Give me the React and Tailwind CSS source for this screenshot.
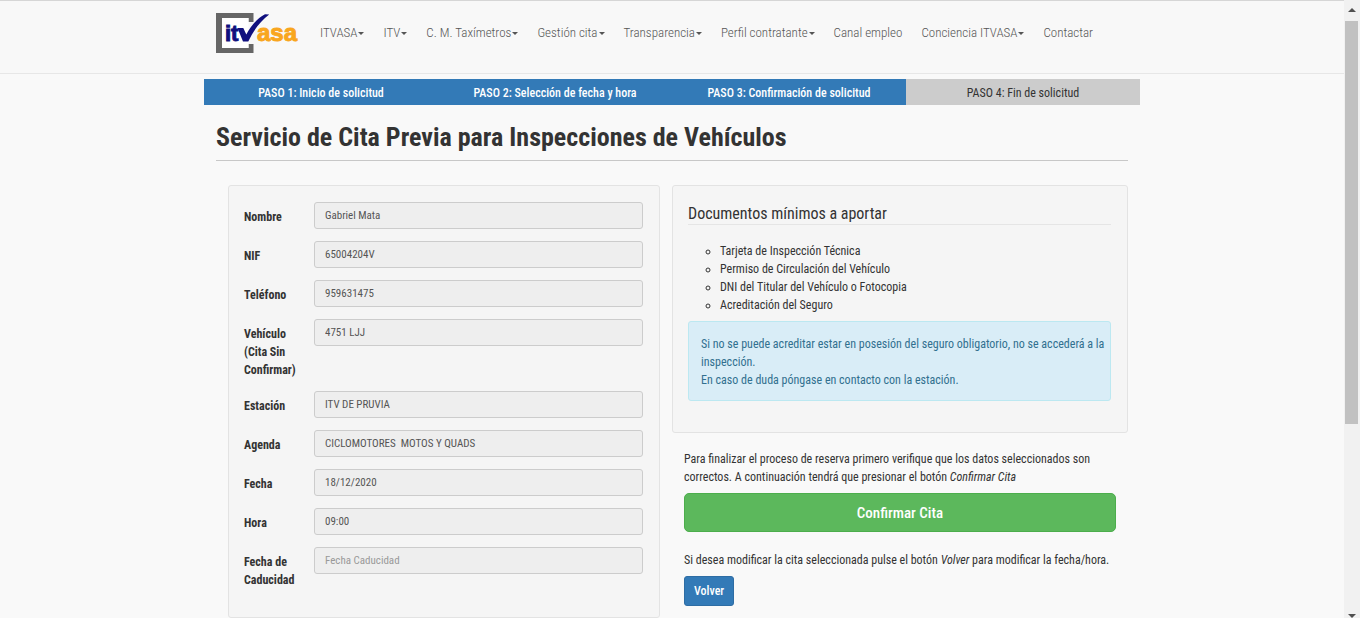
import React from "react";

const menu = [
    { name: "ITVASA", caret: true },
    { name: "ITV", caret: true },
    { name: "C. M. Taxímetros", caret: true },
    { name: "Gestión cita", caret: true },
    { name: "Transparencia", caret: true },
    { name: "Perfil contratante", caret: true },
    { name: "Canal empleo", caret: false },
    { name: "Conciencia ITVASA", caret: true },
    { name: "Contactar", caret: false },
];

const pasos = [
    "PASO 1: Inicio de solicitud",
    "PASO 2: Selección de fecha y hora",
    "PASO 3: Confirmación de solicitud",
    "PASO 4: Fin de solicitud",
];

const campos = [
    { id: "nombre", label: "Nombre", value: "Gabriel Mata" },
    { id: "nif", label: "NIF", value: "65004204V" },
    { id: "telefono", label: "Teléfono", value: "959631475" },
    { id: "vehiculo", label: "Vehículo (Cita Sin Confirmar)", value: "4751 LJJ" },
    { id: "estacion", label: "Estación", value: "ITV DE PRUVIA" },
    { id: "agenda", label: "Agenda", value: "CICLOMOTORES  MOTOS Y QUADS" },
    { id: "fecha", label: "Fecha", value: "18/12/2020" },
    { id: "hora", label: "Hora", value: "09:00" },
    { id: "caducidad", label: "Fecha de Caducidad", value: "", placeholder: "Fecha Caducidad" },
];

function Logo() {
    return (
        <svg width="82" height="40" viewBox="0 0 82 40" role="img" aria-label="itvasa">
            <path d="M37.500 9V0H0v40h37.500v-9h-5v4H6V5h26.500v4z" fill="#666" />
            <path d="M6 5h26.500v30H6z" fill="#fff" />
            <text x="9" y="28" fontFamily="Liberation Sans" fontWeight="bold" fontSize="22" fill="#10107e" stroke="#10107e">it</text>
            <path d="M21.500 15h5.800l3 6.500C35 13 41.500 5 49 1.200l4.200.3C44.500 8 37 18 32.300 28.500h-5.300z" fill="#10107e" />
            <text x="41" y="28" fontFamily="Liberation Sans" fontWeight="bold" fontSize="24" fill="#f9a61e" stroke="#f9a61e">asa</text>
        </svg>
    );
}

function Navbar() {
    return (
        <header className="border-y border-t-[#d6d6d6] border-b-[#e7e7e7] bg-[#f8f8f8]">
            <div className="max-w-[936px] h-[72px] mx-auto px-3 pt-3 flex items-start">
                <a href="#inicio" className="shrink-0">
                    <Logo />
                </a>
                <nav className="pl-[22px] pt-2">
                    <ul className="flex gap-[19px] text-[13px] leading-6 font-light text-[#555]">
                        {menu.map((m) => (
                            <li key={m.name}>
                                <a href="#menu" className="flex items-center gap-px whitespace-nowrap hover:text-gray-800">
                                    {m.name}
                                    {m.caret && (
                                        <svg width="6" height="3" viewBox="0 0 6 3" className="mt-px">
                                            <path d="M0 0h6L3 3z" fill="#555" />
                                        </svg>
                                    )}
                                </a>
                            </li>
                        ))}
                    </ul>
                </nav>
            </div>
        </header>
    );
}

function Pasos() {
    return (
        <ol className="-mx-3 grid grid-cols-4 text-center">
            {pasos.map((p, i) => (
                <li key={p} className={i < 3 ? "pt-[5px] pb-[3px] bg-[#337ab7] text-white font-medium" : "pt-[5px] pb-[3px] bg-[#ccc] text-[#333]"}>
                    {p}
                </li>
            ))}
        </ol>
    );
}

function Datos() {
    return (
        <form className="mx-3 p-4 pl-[15px] border border-[#e3e3e3] rounded-[3px] bg-[#f5f5f5]">
            {campos.map((c) => (
                <div key={c.id} className="flex items-start mb-3">
                    <label htmlFor={c.id} className="w-[70px] pr-3 pt-[6px] shrink-0 font-bold">
                        {c.label}
                    </label>
                    <input
                        id={c.id}
                        type="text"
                        readOnly
                        defaultValue={c.value}
                        placeholder={c.placeholder}
                        className="h-[27px] min-w-0 flex-1 px-[10px] text-[11px] text-[#555] placeholder:text-[#999] bg-[#eee] border border-[#ccc] rounded-[3px]"
                    />
                </div>
            ))}
        </form>
    );
}

function Documentos() {
    return (
        <div>
            <section className="p-[15px] pr-4 pb-[31px] border border-[#e3e3e3] rounded-[3px] bg-[#f5f5f5]">
                <h2 className="pt-[2px] text-base leading-[21px] border-b border-[#e5e5e5]">Documentos mínimos a aportar</h2>
                <ul className="mt-[17px] mb-[7px] pl-8 list-[circle]">
                    <li>Tarjeta de Inspección Técnica</li>
                    <li>Permiso de Circulación del Vehículo</li>
                    <li>DNI del Titular del Vehículo o Fotocopia</li>
                    <li>Acreditación del Seguro</li>
                </ul>
                <p className="pt-[13px] pb-[11px] pl-3 pr-1 border border-[#bce8f1] rounded-[3px] bg-[#d9edf7] text-[#31708f]">
                    Si no se puede acreditar estar en posesión del seguro obligatorio, no se accederá a la inspección.
                    <br />
                    En caso de duda póngase en contacto con la estación.
                </p>
            </section>

            <div className="px-3 pt-[17px]">
                <p>
                    Para finalizar el proceso de reserva primero verifique que los datos seleccionados son correctos. A continuación tendrá que presionar el botón <em>Confirmar Cita</em>
                </p>
                <button type="button" className="mt-[7px] w-full h-[39px] rounded-[5px] border border-[#4cae4c] bg-[#5cb85c] text-white text-[15px] font-medium cursor-pointer">
                    Confirmar Cita
                </button>
                <p className="mt-[19px]">
                    Si desea modificar la cita seleccionada pulse el botón <em>Volver</em> para modificar la fecha/hora.
                </p>
                <button type="button" className="mt-[7px] h-[30px] px-[9px] rounded-[3px] border border-[#2e6da4] bg-[#337ab7] text-white font-medium cursor-pointer">
                    Volver
                </button>
            </div>
        </div>
    );
}

function Scrollbar() {
    return (
        <div className="w-4 pr-px shrink-0 flex flex-col items-center bg-[#f1f1f1]" aria-hidden="true">
            <svg width="8" height="21" viewBox="0 0 8 21">
                <path d="M0 12h8L4 8z" fill="#505050" />
            </svg>
            <div className="w-[13px] grow-[68] bg-[#c1c1c1]"></div>
            <div className="grow-[32]"></div>
            <svg width="8" height="4" viewBox="0 0 8 4">
                <path d="M0 0h8L4 4z" fill="#505050" />
            </svg>
        </div>
    );
}

function App() {
    return (
        <div className="h-screen flex overflow-hidden bg-[#f9f9f9] font-['Roboto_Condensed','Liberation_Sans',sans-serif] text-xs leading-[18px] text-[#333]">
            <div className="flex-1 min-w-0 overflow-hidden">
                <Navbar />
                <main className="max-w-[936px] mx-auto px-3 pt-[5px]">
                    <Pasos />
                    <h1 className="mt-[15px] mb-6 pb-[5px] text-[26px] leading-[35px] font-bold border-b border-[#c8c8c8]">
                        Servicio de Cita Previa para Inspecciones de Vehículos
                    </h1>
                    <div className="grid grid-cols-2 items-start">
                        <Datos />
                        <Documentos />
                    </div>
                </main>
            </div>
            <Scrollbar />
        </div>
    );
}

export default App;
